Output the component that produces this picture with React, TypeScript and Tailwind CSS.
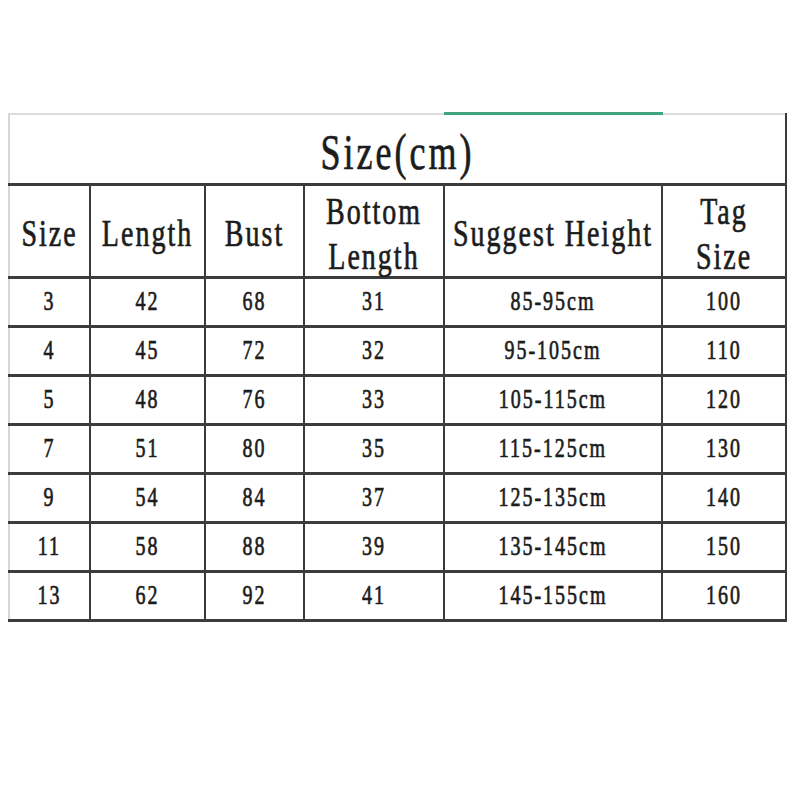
import React from "react"

const rows = [
  ["3", "42", "68", "31", "85-95cm", "100"],
  ["4", "45", "72", "32", "95-105cm", "110"],
  ["5", "48", "76", "33", "105-115cm", "120"],
  ["7", "51", "80", "35", "115-125cm", "130"],
  ["9", "54", "84", "37", "125-135cm", "140"],
  ["11", "58", "88", "39", "135-145cm", "150"],
  ["13", "62", "92", "41", "145-155cm", "160"],
]

const font = { fontFamily: '"Liberation Serif", "DejaVu Serif", serif' }

function Tall({ children, cls }: { children: React.ReactNode; cls: string }) {
  return <span className={"inline-block origin-center [-webkit-text-stroke:0.5px_#1c1c1c] " + cls}>{children}</span>
}

export default function App() {
  return (
    <div className="w-[800px] h-[800px] bg-white text-[#1c1c1c]" style={font}>
      <div className="pt-[113px] pl-[8px]">
        <table className="border-collapse table-fixed w-[777px]">
          <colgroup>
            <col className="w-[81px]" />
            <col className="w-[115px]" />
            <col className="w-[99px]" />
            <col className="w-[140px]" />
            <col className="w-[218px]" />
            <col className="w-[124px]" />
          </colgroup>
          <thead>
            <tr className="h-[70px]">
              <th
                colSpan={6}
                className="relative border-t-2 border-t-[#dcdcdc] border-l-2 border-l-[#d6d6d6] border-r-2 border-r-[#3a3a3a] border-b-[3px] border-b-[#3c3c3c] text-center font-normal"
              >
                <span className="absolute top-[-3px] left-[434px] w-[219px] h-[3px] bg-[#3fa57f]" />
                <Tall cls="scale-y-[1.38] text-[36px] tracking-[3px] leading-[36px] pt-[6px]">Size(cm)</Tall>
              </th>
            </tr>
            <tr className="h-[93px]">
              {["Size", "Length", "Bust", "Bottom\nLength", "Suggest Height", "Tag\nSize"].map((h, i) => (
                <th
                  key={i}
                  className={
                    "text-center font-normal border-b-[3px] border-b-[#3c3c3c] " +
                    (i === 0 ? "border-l-2 border-l-[#d6d6d6] " : "border-l-2 border-l-[#3a3a3a] ") +
                    (i === 5 ? "border-r-2 border-r-[#3a3a3a]" : "")
                  }
                >
                  <Tall cls="scale-y-[1.35] text-[28px] tracking-[2px] leading-[33px] whitespace-pre pt-[4px]">{h}</Tall>
                </th>
              ))}
            </tr>
          </thead>
          <tbody>
            {rows.map((r, ri) => (
              <tr key={ri} className="h-[49px]">
                {r.map((c, ci) => (
                  <td
                    key={ci}
                    className={
                      "text-center border-b-[3px] border-b-[#3c3c3c] " +
                      (ci === 0 ? "border-l-2 border-l-[#d6d6d6] " : "border-l-2 border-l-[#3a3a3a] ") +
                      (ci === 5 ? "border-r-2 border-r-[#3a3a3a]" : "")
                    }
                  >
                    <Tall cls="scale-y-[1.4] text-[20px] tracking-[2px] leading-[20px]">{c}</Tall>
                  </td>
                ))}
              </tr>
            ))}
          </tbody>
        </table>
      </div>
    </div>
  )
}
